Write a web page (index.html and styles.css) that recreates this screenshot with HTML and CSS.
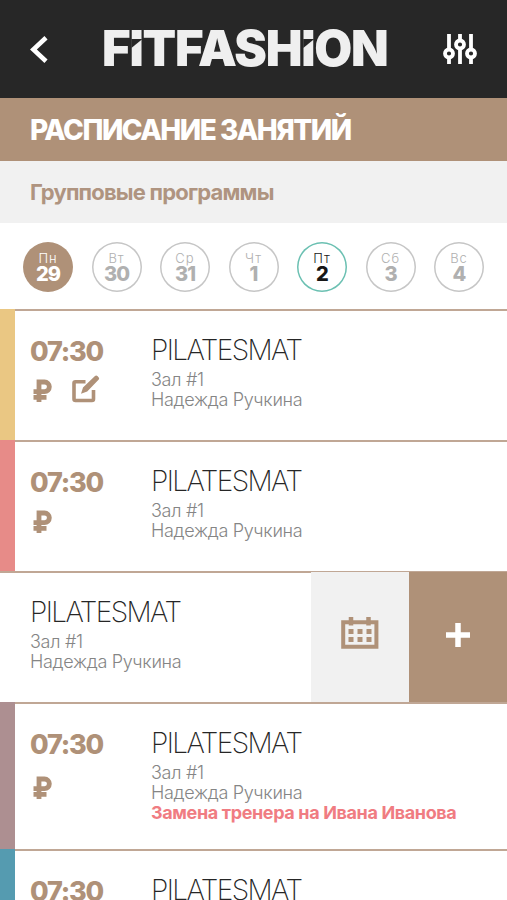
FILE: index.html
```html
<!DOCTYPE html>
<html lang="ru">
<head>
<meta charset="utf-8">
<title>FITFASHION</title>
<link rel="stylesheet" href="styles.css">
</head>
<body>
<svg class="defs" aria-hidden="true">
  <symbol id="ruble" viewBox="0 0 20 24"><path d="M6 23V3h5.500a4.700 4.700 0 0 1 0 9.700H.5M.5 18.300h13" fill="none" stroke="currentColor" stroke-width="4.800"/></symbol>
</svg>
<header class="topbar">
  <svg class="back" viewBox="0 0 18 27"><path d="M16 1.8 3.4 13.5 16 25.2" fill="none" stroke="#fff" stroke-width="4.6"/></svg>
  <div class="logo"><span>F</span><span class="cut">I</span><span>TFASH</span><span class="cut">I</span><span>ON</span></div>
  <svg class="filter" viewBox="0 0 34 30"><g fill="none" stroke="#fff" stroke-width="3.8"><path d="M6 0v15M6 24v6M17 0v6M17 15v15M28 0v15M28 24v6"/><circle cx="6" cy="19.500" r="4"/><circle cx="17" cy="10.500" r="4"/><circle cx="28" cy="19.500" r="4"/></g></svg>
</header>
<h1 class="title"><span>РАСПИСАНИЕ ЗАНЯТИЙ</span></h1>
<h2 class="subtitle"><span>Групповые программы</span></h2>
<nav class="days">
  <div class="day selected"><small>Пн</small><b>29</b></div>
  <div class="day"><small>Вт</small><b>30</b></div>
  <div class="day"><small>Ср</small><b>31</b></div>
  <div class="day"><small>Чт</small><b>1</b></div>
  <div class="day today"><small>Пт</small><b>2</b></div>
  <div class="day"><small>Сб</small><b>3</b></div>
  <div class="day"><small>Вс</small><b>4</b></div>
</nav>
<main>
  <article class="row yellow">
    <div class="when"><time>07:30</time><div class="icons"><svg class="ruble"><use href="#ruble"/></svg><svg class="edit" viewBox="0 0 28 28"><path d="M13.500 6.800H3.500a1.500 1.500 0 0 0-1.500 1.500V24a1.500 1.500 0 0 0 1.500 1.500H20a1.500 1.500 0 0 0 1.500-1.500V15" fill="none" stroke="currentColor" stroke-width="3.600"/><path d="M9 18.800l2-6.300L22.700 1.300a2 2 0 0 1 3 0l.6.6a2 2 0 0 1 0 3L15.200 16.600z" fill="currentColor"/></svg></div></div>
    <div class="info"><h3>PILATESMAT</h3><p>Зал #1</p><p class="coach">Надежда Ручкина</p></div>
  </article>
  <article class="row red">
    <div class="when"><time>07:30</time><div class="icons"><svg class="ruble"><use href="#ruble"/></svg></div></div>
    <div class="info"><h3>PILATESMAT</h3><p>Зал #1</p><p class="coach">Надежда Ручкина</p></div>
  </article>
  <article class="row swiped">
    <div class="info"><h3>PILATESMAT</h3><p>Зал #1</p><p class="coach">Надежда Ручкина</p></div>
    <div class="action calendar"><svg viewBox="0 0 38 34"><path d="M2.200 6.200h33.200v24.500H2.200z" fill="none" stroke="currentColor" stroke-width="4"/><path d="M10 1v8.500M27.500 1v8.500" stroke="currentColor" stroke-width="4.500"/><path d="M7.500 13h5v5h-5zM16.500 13h5v5h-5zM25.500 13h5v5h-5zM7.500 21h5v5h-5zM16.500 21h5v5h-5zM25.500 21h5v5h-5z" fill="currentColor"/></svg></div>
    <div class="action add"><svg viewBox="0 0 24 24"><path d="M12 0v24M0 12h24" stroke="#fff" stroke-width="5.500"/></svg></div>
  </article>
  <article class="row mauve">
    <div class="when"><time>07:30</time><div class="icons"><svg class="ruble"><use href="#ruble"/></svg></div></div>
    <div class="info"><h3>PILATESMAT</h3><p>Зал #1</p><p class="coach">Надежда Ручкина</p><p class="note">Замена тренера на Ивана Иванова</p></div>
  </article>
  <article class="row blue">
    <div class="when"><time>07:30</time></div>
    <div class="info"><h3>PILATESMAT</h3></div>
  </article>
</main>
</body>
</html>
```

FILE: styles.css
```css
* { box-sizing: border-box; margin: 0; padding: 0; }
body { width: 507px; height: 900px; overflow: hidden; background: #fff; font-family: Inter, "Liberation Sans", sans-serif; white-space: nowrap; }
svg { display: block; flex: none; }
.defs { display: none; }
.topbar { height: 98px; background: #272727; display: flex; align-items: center; padding-left: 30px; }
.back { width: 18px; height: 27px; }
.logo { display: flex; margin-left: 54px; width: 290px; font-size: 49px; line-height: 60px; font-weight: 900; color: #efefef; letter-spacing: -1.2px; }
.cut { position: relative; }
.cut::after { content: ""; position: absolute; left: 2px; top: 20px; width: 11px; height: 9px; background: #272727; clip-path: polygon(0 0, 100% 0, 0 100%); }
.filter { width: 34px; height: 30px; margin-left: 51px; }
.title { height: 63px; padding-left: 30px; background: #af9178; color: #fff; font-size: 28px; font-weight: 800; line-height: 65px; letter-spacing: -1.5px; }
.subtitle { height: 62px; padding-left: 30px; background: #f1f1f1; color: #af9480; font-size: 22px; font-weight: 700; line-height: 63px; letter-spacing: -.8px; }
.days { height: 86px; padding: 19px 23px 0; display: flex; justify-content: space-between; }
.day { width: 50px; height: 50px; box-shadow: inset 0 0 0 1.5px #c6c6c6; border-radius: 50%; color: #b0b0b0; display: flex; flex-direction: column; align-items: center; }
.day small { font-size: 13px; line-height: 16px; margin-top: 8px; font-weight: 300; letter-spacing: 1px; }
.day b { font-size: 20px; line-height: 16px; font-weight: 800; letter-spacing: -1px; }
.selected { background: #af9178; box-shadow: none; color: #fff; }
.today { box-shadow: inset 0 0 0 1.5px #6bc0b2; color: #171717; }
.row { height: 131px; display: flex; border-left: 15px solid; background: linear-gradient(#c0a795, #c0a795) 0 0 / 100% 2px no-repeat #fff; }
.yellow { border-left-color: #eac783; }
.red { border-left-color: #e78b88; }
.mauve { height: 147px; border-left-color: #ad8f91; }
.blue { height: 60px; border-left-color: #559bb0; }
.when { width: 136px; padding: 27px 0 0 15px; color: #af9178; }
time { display: block; font-size: 27px; line-height: 31px; font-weight: 800; letter-spacing: -1.2px; }
.icons { display: flex; margin-top: 10px; padding-left: 3px; }
.ruble { width: 20px; height: 24px; margin-top: 2px; }
.edit { width: 28px; height: 28px; margin-left: 19px; margin-top: -2px; }
.mauve .icons { margin-top: 14px; }
.info { padding-top: 25px; color: #858585; }
h3 { font-size: 28px; line-height: 32px; font-weight: 200; color: #262626; letter-spacing: -1.6px; }
.info p { font-size: 18px; line-height: 20px; font-weight: 300; letter-spacing: -.3px; }
.info h3 + p { margin-top: 4px; }
.info .note { color: #f07c82; font-weight: 700; letter-spacing: -.37px; }
.swiped { border-left: 0; padding-left: 30px; }
.swiped .info { flex: 1; }
.action { width: 98px; margin-top: 1px; display: flex; align-items: center; justify-content: center; }
.calendar { background: #f1f1f1; color: #af9178; }
.calendar svg { width: 38px; height: 34px; margin-top: -8px; }
.add { background: #af9178; }
.add svg { width: 24px; height: 24px; margin-top: -4px; }
```
